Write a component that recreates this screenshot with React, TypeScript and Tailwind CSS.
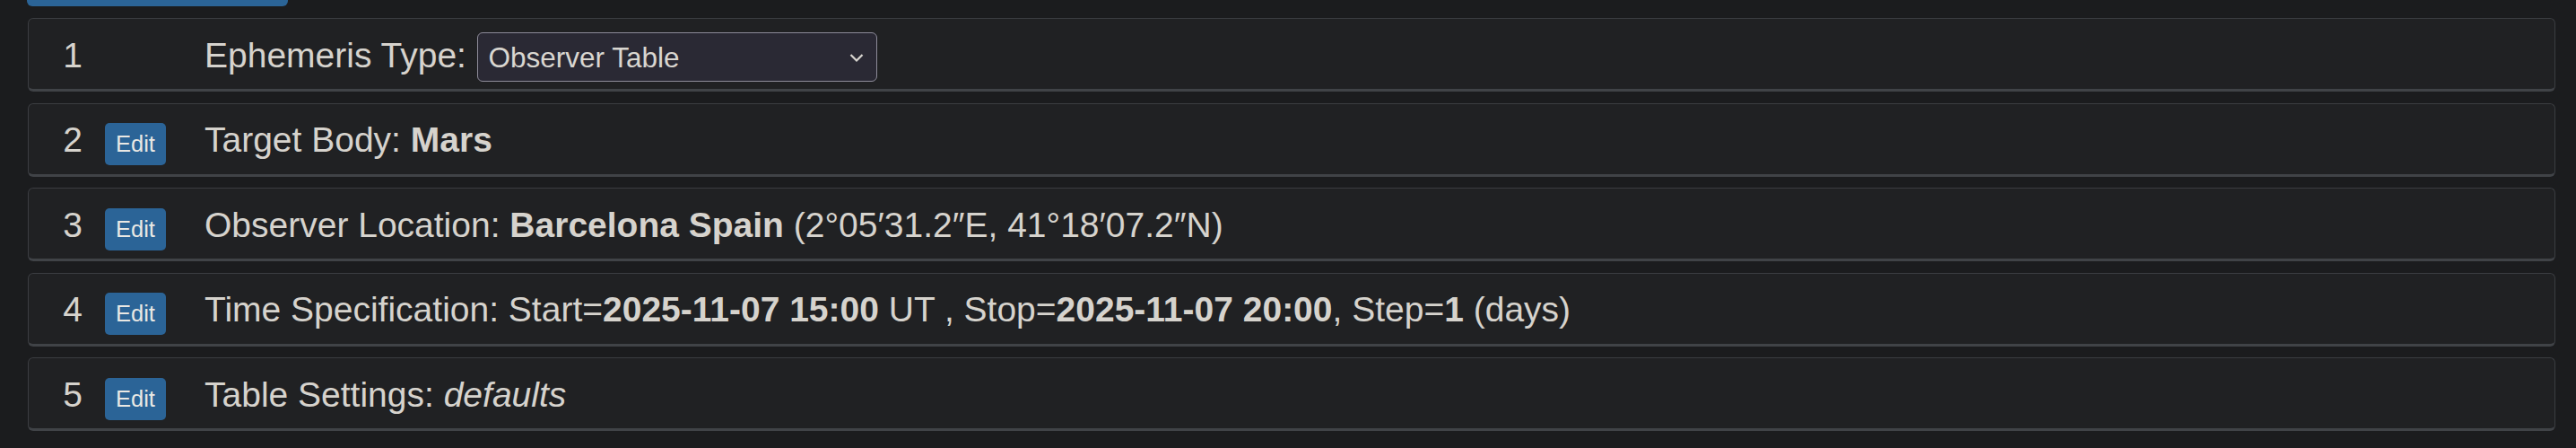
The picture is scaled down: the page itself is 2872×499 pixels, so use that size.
import React from 'react';

type Step = {
    num: number;
    editable: boolean;
    content: React.ReactNode;
};

// Dropdown styled like the dark native select in the reference
const TypeSelect = () => (
    <div className="ml-[12px] -mt-[4.5px] flex w-[446px] items-baseline justify-between rounded-[6px] border border-[#8d8b99] bg-[#2a2934] pl-[11.5px] pr-[14px] pt-[2px] text-[31.5px] leading-[51px] text-[#d9d6d0]">
        <span>Observer Table</span>
        <svg width="16" height="11" viewBox="0 0 16 11" className="self-center" fill="none">
            <polyline points="1.5,2 8,8.5 14.5,2" stroke="#d9d6d0" strokeWidth="2.2" />
        </svg>
    </div>
);

const steps: Step[] = [
    {
        num: 1,
        editable: false,
        content: (
            <>
                <span>Ephemeris Type:</span>
                <TypeSelect />
            </>
        ),
    },
    {
        num: 2,
        editable: true,
        content: (
            <span>
                Target Body: <b>Mars</b>
            </span>
        ),
    },
    {
        num: 3,
        editable: true,
        content: (
            <span>
                Observer Location: <b>Barcelona Spain</b> (2°05′31.2″E, 41°18′07.2″N)
            </span>
        ),
    },
    {
        num: 4,
        editable: true,
        content: (
            <span>
                Time Specification: Start=<b>2025-11-07 15:00</b> UT , Stop=<b>2025-11-07 20:00</b>, Step=<b>1</b> (days)
            </span>
        ),
    },
    {
        num: 5,
        editable: true,
        content: (
            <span>
                Table Settings: <i>defaults</i>
            </span>
        ),
    },
];

export default function App() {
    return (
        <div
            className="min-h-[499px] w-full bg-[#1b1c1e] pl-[30px] pr-[23px] text-[#d6d3cd]"
            style={{ fontFamily: '"Liberation Sans", Arial, sans-serif' }}
        >
            {/* bottom edge of the button above the list */}
            <div className="h-[7px] w-[291px] rounded-b-[6px] bg-[#2b6497]" />

            <div className="mt-[13px] ml-[1px] flex flex-col gap-[12.5px]">
                {steps.map((s) => (
                    <div
                        key={s.num}
                        className="flex h-[82px] items-baseline rounded-[6px] border border-b-[3px] border-[#3b3d41] border-b-[#404347] bg-[#202123] pl-[29px] pt-[18.5px] text-[39px] leading-[44px]"
                    >
                        <span className="w-[40px] text-center">{s.num}</span>
                        {s.editable ? (
                            <span className="ml-[16px] inline-block w-[68px] rounded-[5px] bg-[#2b6497] pt-[4px] pb-[4px] text-center text-[25.5px] leading-[39px] text-[#e9e8e4]">
                                Edit
                            </span>
                        ) : (
                            <span className="ml-[16px] w-[68px]" />
                        )}
                        <div className="ml-[43px] flex items-baseline whitespace-nowrap">{s.content}</div>
                    </div>
                ))}
            </div>
        </div>
    );
}
